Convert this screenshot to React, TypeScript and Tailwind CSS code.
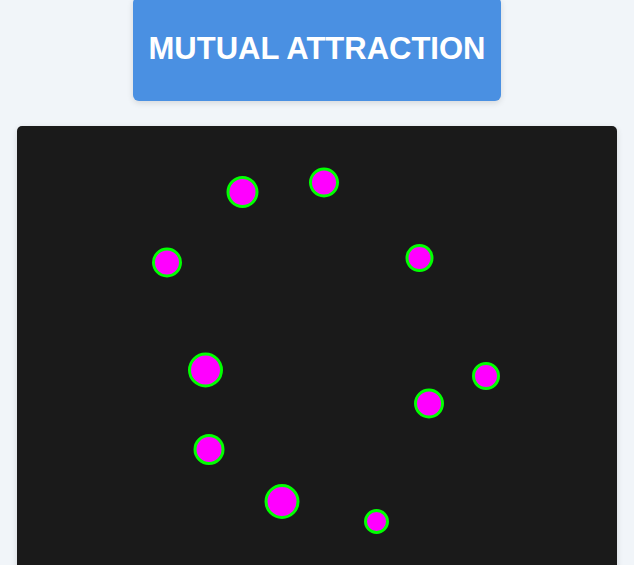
const particles = [
  { x: 242.5, y: 192, d: 32 },
  { x: 324, y: 182.5, d: 30 },
  { x: 167, y: 262.5, d: 30 },
  { x: 419.5, y: 258, d: 28 },
  { x: 205.5, y: 370, d: 35 },
  { x: 486, y: 376, d: 28 },
  { x: 429, y: 403.5, d: 30 },
  { x: 209, y: 449.5, d: 31 },
  { x: 282, y: 501.5, d: 35 },
  { x: 376.5, y: 521.5, d: 25 },
];

export default function App() {
  return (
    <div className="min-h-screen bg-[#f1f5f9] flex flex-col items-center font-['Liberation_Sans',Arial,sans-serif] overflow-hidden">
      <h1 className="-mt-[3px] px-4 py-[35px] leading-[34px] text-[31px] font-bold text-white bg-[#4a90e2] rounded-md shadow-[0_2px_6px_rgba(0,0,0,0.12)]">
        MUTUAL ATTRACTION
      </h1>
      <div className="mt-[25px] w-[600px] h-[600px] shrink-0 bg-[#1a1a1a] rounded-[5px] shadow-[0_2px_6px_rgba(0,0,0,0.12)] overflow-hidden">
        <svg width="600" height="600" viewBox="0 0 600 600">
          {particles.map((p, i) => (
            <circle
              key={i}
              cx={p.x - 17}
              cy={p.y - 126}
              r={p.d / 2 - 1.5}
              fill="#ff00ff"
              stroke="#00ff00"
              strokeWidth={3}
            />
          ))}
        </svg>
      </div>
    </div>
  );
}
